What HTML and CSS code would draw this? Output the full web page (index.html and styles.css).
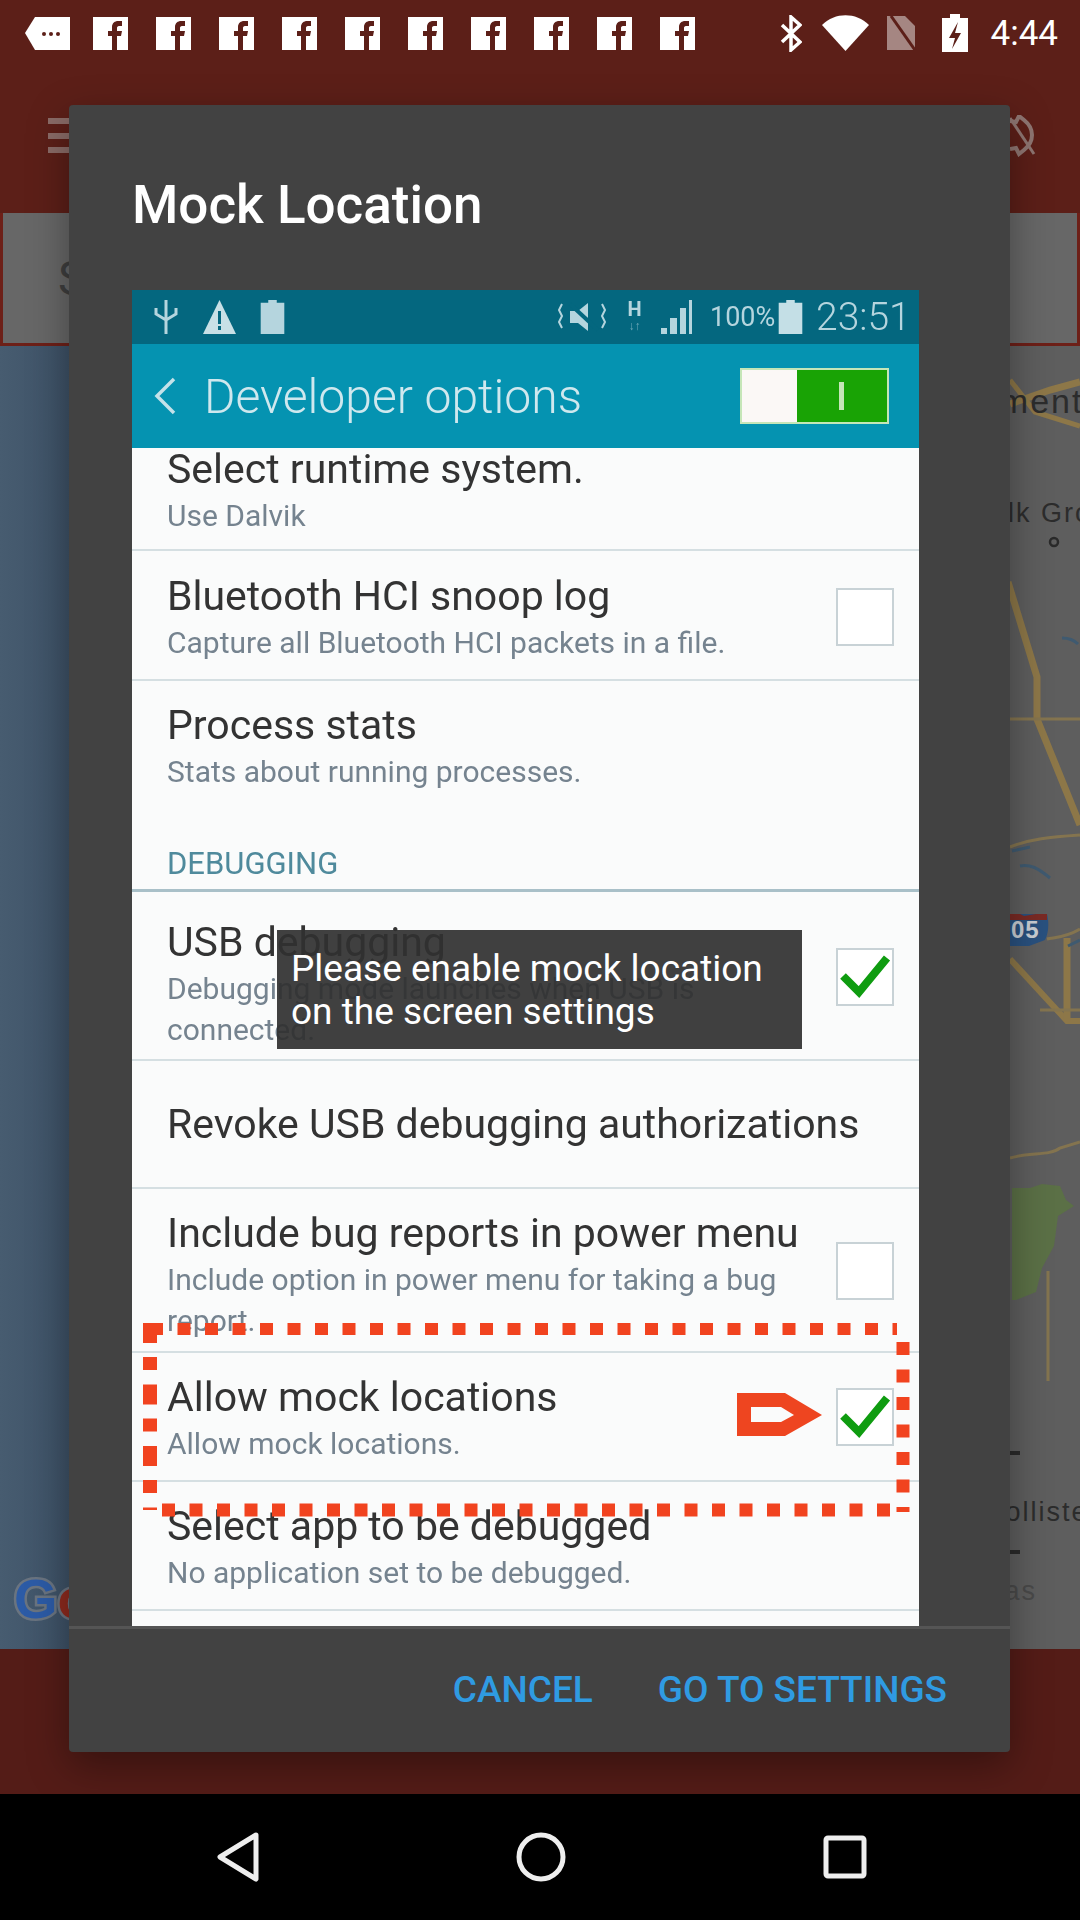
FILE: index.html
```html
<!DOCTYPE html>
<html>

<head>
    <title>Mock Location</title>
    <link rel="stylesheet" href="styles.css">
</head>

<body>
    <svg class="defs" width="0" height="0">
        <symbol id="fb" viewBox="0 0 35 33">
            <rect width="35" height="33" fill="#fff" />
            <path d="M19 33V19h-4v-5h4v-4c0-4 3-6 6-6h4v5h-3c-1.500 0-2 1-2 2v3h5l-1 5h-4v14z" fill="#5c1f18" />
        </symbol>
        <symbol id="tick" viewBox="0 0 58 58">
            <path d="M7 28l16 16L51 10" fill="none" stroke="#0f9c10" stroke-width="8" />
        </symbol>
    </svg>

    <div class="screen">
        <!-- phone status bar -->
        <div class="status">
            <svg class="st-note" viewBox="0 0 45 33">
                <path d="M10 0h35v33H10L0 16z" fill="#fff" />
                <circle cx="19" cy="17" r="2" fill="#5c1f18" /><circle cx="26" cy="17" r="2" fill="#5c1f18" /><circle cx="33" cy="17" r="2" fill="#5c1f18" />
            </svg>
            <svg class="st-fb"><use href="#fb" /></svg>
            <svg class="st-fb"><use href="#fb" /></svg>
            <svg class="st-fb"><use href="#fb" /></svg>
            <svg class="st-fb"><use href="#fb" /></svg>
            <svg class="st-fb"><use href="#fb" /></svg>
            <svg class="st-fb"><use href="#fb" /></svg>
            <svg class="st-fb"><use href="#fb" /></svg>
            <svg class="st-fb"><use href="#fb" /></svg>
            <svg class="st-fb"><use href="#fb" /></svg>
            <svg class="st-fb"><use href="#fb" /></svg>
            <svg class="st-bt" viewBox="0 0 22 37">
                <path d="M2 10l18 17-9 8V2l9 8L2 27" fill="none" stroke="#fff" stroke-width="3.500" />
            </svg>
            <svg class="st-wifi" viewBox="0 0 47 36">
                <path d="M23.500 36L0 10C13-3 34-3 47 10z" fill="#fff" />
            </svg>
            <svg class="st-sim" viewBox="0 0 34 34">
                <path d="M2 0h18l10 10v24H2z" fill="#a58682" />
                <path d="M6 0l24 34" stroke="#5c1f18" stroke-width="3" />
            </svg>
            <svg class="st-batt" viewBox="0 0 26 38">
                <path d="M8 0h10v4h8v34H0V4h8z" fill="#fff" />
                <path d="M16 8l-9 16h6l-3 11 9-16h-6z" fill="#5c1f18" />
            </svg>
            <span class="st-time">4:44</span>
        </div>

        <!-- toolbar, mostly covered by the dialog -->
        <div class="toolbar">
            <div class="burger"><i></i><i></i><i></i></div>
            <svg class="gear" viewBox="0 0 28 42">
                <path d="M0 6l6 1 3-6 5 4c5 4 8 9 8 15s-3 11-8 15l-5 4-3-6-6 1" fill="none" stroke="#8f7672" stroke-width="4" />
                <path d="M0 3l24 36" stroke="#8f7672" stroke-width="3" />
            </svg>
        </div>
        <div class="search"><span>Search</span></div>

        <div class="map">
            <svg class="map-art" viewBox="0 0 1080 1303">
                <defs>
                    <linearGradient id="water" x1="0" x2="1" y1="0" y2="0">
                        <stop offset="0" stop-color="#475c70" />
                        <stop offset="1" stop-color="#3d5166" />
                    </linearGradient>
                </defs>
                <rect width="72" height="1303" fill="url(#water)" />
                <!-- park -->
                <path d="M1012 842h18l12-4 18 2 6 14 8 6-16 10-4 30-12 22-6 24-20 8-4 0z" fill="#5b7046" />
                <!-- main roads -->
                <g fill="none" stroke="#8d7748" stroke-width="7">
                    <path d="M1008 236l29 95v42l43 106" />
                    <path d="M1010 613l57 62 13 0" stroke-width="6" />
                    <path d="M1067 592v83" />
                    <path d="M1010 58l40-14 30-8" />
                    <path d="M1010 34l25 32 45 14" stroke-width="5" />
                </g>
                <g fill="none" stroke="#84744f" stroke-width="3">
                    <path d="M1010 373h70" />
                    <path d="M1010 501c20-8 40-10 70-12" />
                    <path d="M1047 593c10-2 20-2 33-10" />
                    <path d="M1040 664h40" />
                    <path d="M1010 812c20-6 40-2 50-10l20-6" />
                    <path d="M1048 925v110" />
                </g>
                <g fill="none" stroke="#3f5a70" stroke-width="3">
                    <path d="M1012 505l18-4" />
                    <path d="M1020 520c10-2 18 2 30 12" />
                    <path d="M1062 292c6 0 12 2 16 6" />
                    <path d="M1068 600l12-6" />
                </g>
                <!-- interstate shield -->
                <path d="M1010 568h37c2 8 2 18-2 26l-16 6h-19z" fill="#29517f" />
                <path d="M1010 568h10l4 2 12-2h11v6h-37z" fill="#7a2a24" />
                <text class="map-shield" x="1011" y="592">05</text>
                <!-- place names -->
                <text class="map-town" x="901" y="67">Sacramento</text>
                <text class="map-town map-mid" x="988" y="176">Elk Grove</text>
                <circle cx="1054" cy="196" r="4" fill="none" stroke="#2a2a2a" stroke-width="2.500" />
                <text class="map-town map-mid" x="984" y="1175">Hollister</text>
                <text class="map-town map-faint" x="1037" y="1254" text-anchor="end">Salinas</text>
                <path d="M1010 1107h10M1010 1206h10" stroke="#2a2a2a" stroke-width="4" />
                <text class="map-logo" x="14" y="1272"><tspan fill="#2c5ba6">G</tspan><tspan fill="#8e2a1e">o</tspan></text>
            </svg>
        </div>
        <div class="red-band"></div>

        <div class="nav">
            <svg class="nav-back" viewBox="0 0 42 50">
                <path d="M39 3L3 25l36 22z" fill="none" stroke="#eee" stroke-width="5" stroke-linejoin="round" />
            </svg>
            <svg class="nav-home" viewBox="0 0 50 50">
                <ellipse cx="25" cy="25" rx="22" ry="22" fill="none" stroke="#eee" stroke-width="5" />
            </svg>
            <svg class="nav-recent" viewBox="0 0 44 44">
                <rect x="3" y="3" width="38" height="38" rx="2" fill="none" stroke="#eee" stroke-width="5" />
            </svg>
        </div>

        <!-- dialog -->
        <div class="dialog">
            <h1 class="dialog-title">Mock Location</h1>
            <div class="shot">
                <div class="shot-status">
                    <svg class="si si-usb" viewBox="0 0 24 34">
                        <path d="M12 0v34M2 8v6l10 6 10-6V8" fill="none" stroke="#b5d5de" stroke-width="3" />
                    </svg>
                    <svg class="si si-warn" viewBox="0 0 33 34">
                        <path d="M16.500 0L33 34H0z" fill="#c8e0e6" />
                        <path d="M15 11h3v13h-3zM15 26h3v4h-3z" fill="#04677f" />
                    </svg>
                    <svg class="si si-batt" viewBox="0 0 25 36">
                        <path d="M8 0h9v3h8v33H0V3h8z" fill="#b5d5de" />
                    </svg>
                    <svg class="si si-mute" viewBox="0 0 51 32">
                        <path d="M12 10h8l10-8v28l-10-8h-8z" fill="#b5d5de" />
                        <path d="M12 3l28 26" stroke="#04677f" stroke-width="4" />
                        <path d="M4 3l-3 6 3 6-3 6 3 6M44 3l3 6-3 6 3 6-3 6" fill="none" stroke="#b5d5de" stroke-width="2" />
                    </svg>
                    <div class="shot-net"><b>H</b><span>↓↑</span></div>
                    <svg class="si si-signal" viewBox="0 0 34 34">
                        <path d="M0 34h6v-6H0zM9 34h7V18H9zM19 34h6V8h-6zM28 34h3V0h-3z" fill="#b5d5de" />
                    </svg>
                    <span class="shot-pct">100%</span>
                    <svg class="si si-batt2" viewBox="0 0 25 36">
                        <path d="M8 0h9v3h8v33H0V3h8z" fill="#c4dfe6" />
                    </svg>
                    <span class="shot-time">23:51</span>
                </div>
                <div class="shot-bar">
                    <svg class="shot-back" viewBox="0 0 22 38">
                        <path d="M20 2L3 19l17 17" fill="none" stroke="#c4e2e9" stroke-width="3.500" />
                    </svg>
                    <span class="shot-bar-title">Developer options</span>
                    <div class="shot-switch"><i></i></div>
                </div>

                <div class="row row-runtime">
                    <div class="row-text">
                        <div class="row-title">Select runtime system.</div>
                        <div class="row-sub">Use Dalvik</div>
                    </div>
                </div>
                <div class="row row-bluetooth">
                    <div class="row-text">
                        <div class="row-title">Bluetooth HCI snoop log</div>
                        <div class="row-sub">Capture all Bluetooth HCI packets in a file.</div>
                    </div>
                    <div class="check"></div>
                </div>
                <div class="row row-stats">
                    <div class="row-text">
                        <div class="row-title">Process stats</div>
                        <div class="row-sub">Stats about running processes.</div>
                    </div>
                </div>
                <div class="section">DEBUGGING</div>
                <div class="row row-usb">
                    <div class="row-text">
                        <div class="row-title">USB debugging</div>
                        <div class="row-sub">Debugging mode launches when USB is<br>connected.</div>
                    </div>
                    <div class="check"><svg><use href="#tick" /></svg></div>
                </div>
                <div class="row row-revoke">
                    <div class="row-title">Revoke USB debugging authorizations</div>
                </div>
                <div class="row row-bug">
                    <div class="row-text">
                        <div class="row-title">Include bug reports in power menu</div>
                        <div class="row-sub">Include option in power menu for taking a bug<br>report.</div>
                    </div>
                    <div class="check"></div>
                </div>
                <div class="row row-mock">
                    <div class="row-text">
                        <div class="row-title">Allow mock locations</div>
                        <div class="row-sub">Allow mock locations.</div>
                    </div>
                    <div class="check"><svg><use href="#tick" /></svg></div>
                </div>
                <div class="row row-app">
                    <div class="row-text">
                        <div class="row-title">Select app to be debugged</div>
                        <div class="row-sub">No application set to be debugged.</div>
                    </div>
                </div>

                <!-- red markup drawn on the screenshot -->
                <svg class="markup" viewBox="0 0 787 1336">
                    <g fill="none" stroke="#f1431f" stroke-width="13">
                        <path d="M18 1039H765" stroke-dasharray="13 14.500" stroke-width="12" />
                        <path d="M18 1033V1220" stroke-width="14" stroke-dasharray="20 14 13 14.500" />
                        <path d="M771 1052V1222" stroke-dasharray="13 14.500" />
                        <path d="M30 1220H765" stroke-dasharray="13 14.500" stroke-width="13" />
                    </g>
                    <path d="M605 1103h48l37 22-37 21h-48zM619 1117v15h30l13-7-13-8z" fill="#ee4520" fill-rule="evenodd" />
                </svg>
            </div>
            <div class="dialog-actions">
                <span class="action">CANCEL</span>
                <span class="action">GO TO SETTINGS</span>
            </div>
        </div>

        <div class="toast">Please enable mock location<br>on the screen settings</div>
    </div>
</body>

</html>
```

FILE: styles.css
```css
body {
    margin: 0;
    font-family: Roboto, sans-serif;
}
.defs {
    position: absolute;
}
.screen {
    position: relative;
    width: 1080px;
    height: 1920px;
    overflow: hidden;
    display: flex;
    flex-direction: column;
    background-color: #5c1f18;
}

/* status bar */
.status {
    height: 66px;
    display: flex;
    align-items: center;
    padding: 0 22px 0 25px;
}
.status svg {
    flex: none;
}
.st-note {
    width: 45px;
    height: 33px;
    margin-right: 23px;
}
.st-fb {
    width: 35px;
    height: 33px;
    margin-right: 28px;
}
.st-bt {
    width: 22px;
    height: 37px;
    margin-left: auto;
    margin-right: 20px;
}
.st-wifi {
    width: 47px;
    height: 36px;
    margin-right: 16px;
}
.st-sim {
    width: 34px;
    height: 34px;
    margin-right: 23px;
}
.st-batt {
    width: 26px;
    height: 38px;
    margin-right: 18px;
}
.st-time {
    color: #fff;
    font-size: 35px;
    width: 72px;
    text-align: right;
}

/* what sits behind the dialog */
.toolbar {
    height: 147px;
    position: relative;
    display: flex;
    justify-content: space-between;
    padding: 49px 42px 0 48px;
    box-sizing: border-box;
}
.burger {
    width: 21px;
    height: 35px;
    display: flex;
    flex-direction: column;
    justify-content: space-between;
    margin-top: 3px;
}
.burger i {
    height: 6px;
    background-color: #8a6b67;
}
.gear {
    width: 28px;
    height: 42px;
}
.search {
    height: 133px;
    box-sizing: border-box;
    background-color: #676767;
    border: solid 3px #6d2018;
    border-top: none;
    display: flex;
    align-items: center;
    padding-left: 55px;
    color: #3e3e3e;
    font-size: 48px;
}
.map {
    height: 1303px;
    background-color: #5e5e5e;
}
.map-art {
    display: block;
    width: 1080px;
    height: 1303px;
}
.map-town {
    font-family: "Liberation Sans", sans-serif;
    font-size: 34px;
    letter-spacing: 2px;
    fill: #2c2c2c;
}
.map-mid {
    font-size: 27px;
}
.map-faint {
    font-size: 27px;
    fill: #4a4a4a;
}
.map-shield {
    font-family: "Liberation Sans", sans-serif;
    font-size: 24px;
    font-weight: bold;
    letter-spacing: 1px;
    fill: #c9ced4;
}
.map-logo {
    font-family: "Liberation Sans", sans-serif;
    font-size: 56px;
    font-weight: bold;
    stroke: #6a7480;
    stroke-width: 5px;
    paint-order: stroke;
}
.red-band {
    height: 145px;
    background-color: #541c17;
}
.nav {
    height: 126px;
    background-color: #000;
    position: relative;
    display: flex;
    align-items: center;
    padding: 0 213px 0 217px;
    justify-content: space-between;
}
.nav-back {
    width: 42px;
    height: 50px;
}
.nav-home {
    width: 50px;
    height: 50px;
}
.nav-recent {
    width: 44px;
    height: 44px;
}

/* dialog */
.dialog {
    position: absolute;
    left: 69px;
    top: 105px;
    width: 941px;
    height: 1647px;
    background-color: #424242;
    border-radius: 4px;
    box-shadow: 0 14px 40px rgba(0, 0, 0, 0.35);
}
.dialog-title {
    margin: 0;
    height: 185px;
    box-sizing: border-box;
    padding: 70px 0 0 63px;
    color: #fff;
    font-size: 53px;
    font-weight: 500;
    line-height: 60px;
}
.dialog-actions {
    height: 124px;
    box-sizing: border-box;
    border-top: solid 3px #555;
    display: flex;
    justify-content: flex-end;
    align-items: center;
    gap: 65px;
    padding-right: 63px;
}
.action {
    color: #2f9be2;
    font-size: 37px;
    font-weight: 500;
}

/* the screenshot inside the dialog */
.shot {
    position: relative;
    width: 787px;
    height: 1336px;
    margin-left: 63px;
    overflow: hidden;
    background-color: #fafbfb;
    filter: blur(0.7px);
}
.shot-status {
    height: 54px;
    background-color: #04677f;
    display: flex;
    align-items: center;
    color: #b5d5de;
}
.si {
    flex: none;
    height: 34px;
}
.si-usb {
    width: 24px;
    margin-left: 22px;
}
.si-warn {
    width: 33px;
    margin-left: 25px;
}
.si-batt {
    width: 25px;
    margin-left: 24px;
}
.si-mute {
    width: 51px;
    margin-left: 273px;
}
.shot-net {
    width: 17px;
    margin-left: 17px;
    display: flex;
    flex-direction: column;
    align-items: center;
}
.shot-net b {
    font-size: 20px;
    line-height: 18px;
}
.shot-net span {
    font-size: 12px;
    line-height: 16px;
    white-space: nowrap;
    opacity: 0.6;
}
.si-signal {
    width: 34px;
    margin-left: 18px;
}
.shot-pct {
    font-size: 27px;
    margin-left: 15px;
    width: 61px;
    white-space: nowrap;
}
.si-batt2 {
    width: 25px;
    margin-left: 7px;
}
.shot-time {
    font-size: 39px;
    font-weight: 300;
    margin-left: 13px;
}
.shot-bar {
    height: 104px;
    background-color: #0593b1;
    display: flex;
    align-items: center;
    color: #cfe8ee;
}
.shot-back {
    width: 22px;
    height: 38px;
    margin-left: 22px;
}
.shot-bar-title {
    font-size: 48px;
    font-weight: 300;
    margin-left: 28px;
}
.shot-switch {
    width: 149px;
    height: 56px;
    margin-left: auto;
    margin-right: 30px;
    box-sizing: border-box;
    background-color: #fbf8f6;
    border: solid 2px #c5e6b8;
    display: flex;
    justify-content: flex-end;
}
.shot-switch i {
    width: 90px;
    background-color: #19a305;
    position: relative;
}
.shot-switch i::after {
    content: "";
    position: absolute;
    left: 42px;
    top: 12px;
    width: 5px;
    height: 28px;
    background-color: #c5e6b8;
}

.row {
    display: flex;
    box-sizing: border-box;
    padding: 20px 25px 0 35px;
    border-bottom: solid 2px #d5dfe2;
    overflow: hidden;
}
.row-text {
    flex: 1;
}
.row-title {
    color: #333;
    font-size: 41px;
    line-height: 48px;
    white-space: nowrap;
}
.row-sub {
    color: #75838f;
    font-size: 30px;
    line-height: 41px;
    margin-top: 2px;
    white-space: nowrap;
}
.check {
    flex: none;
    width: 58px;
    height: 58px;
    box-sizing: border-box;
    border: solid 2px #c8d2d6;
    background-color: #fff;
    position: relative;
}
.check svg {
    position: absolute;
    left: -2px;
    top: -2px;
    width: 58px;
    height: 58px;
}
.row-runtime {
    height: 103px;
    padding-top: 0;
}
.row-runtime .row-text {
    margin-top: -3px;
}
.row-bluetooth {
    height: 130px;
    padding-top: 21px;
}
.row-bluetooth .check {
    margin-top: 16px;
}
.row-stats {
    height: 157px;
    border-bottom: none;
}
.section {
    height: 54px;
    box-sizing: border-box;
    padding-left: 35px;
    color: #4f8a9c;
    font-size: 31px;
    line-height: 52px;
    border-bottom: solid 3px #a9c0c8;
}
.row-usb {
    height: 169px;
    padding-top: 26px;
}
.row-usb .check {
    margin-top: 30px;
}
.row-revoke {
    height: 128px;
    align-items: center;
    padding-top: 0;
}
.row-bug {
    height: 164px;
}
.row-bug .check {
    margin-top: 33px;
}
.row-mock {
    height: 129px;
}
.row-mock .check {
    margin-top: 15px;
}
.row-app {
    height: 129px;
}
.markup {
    position: absolute;
    left: 0;
    top: 0;
    width: 787px;
    height: 1336px;
}

/* toast, the list shows faintly through it */
.toast {
    position: absolute;
    left: 277px;
    top: 930px;
    width: 525px;
    height: 119px;
    box-sizing: border-box;
    padding: 17px 14px;
    background-color: rgba(48, 48, 48, 0.92);
    color: #fff;
    font-size: 37px;
    line-height: 43px;
}
```
